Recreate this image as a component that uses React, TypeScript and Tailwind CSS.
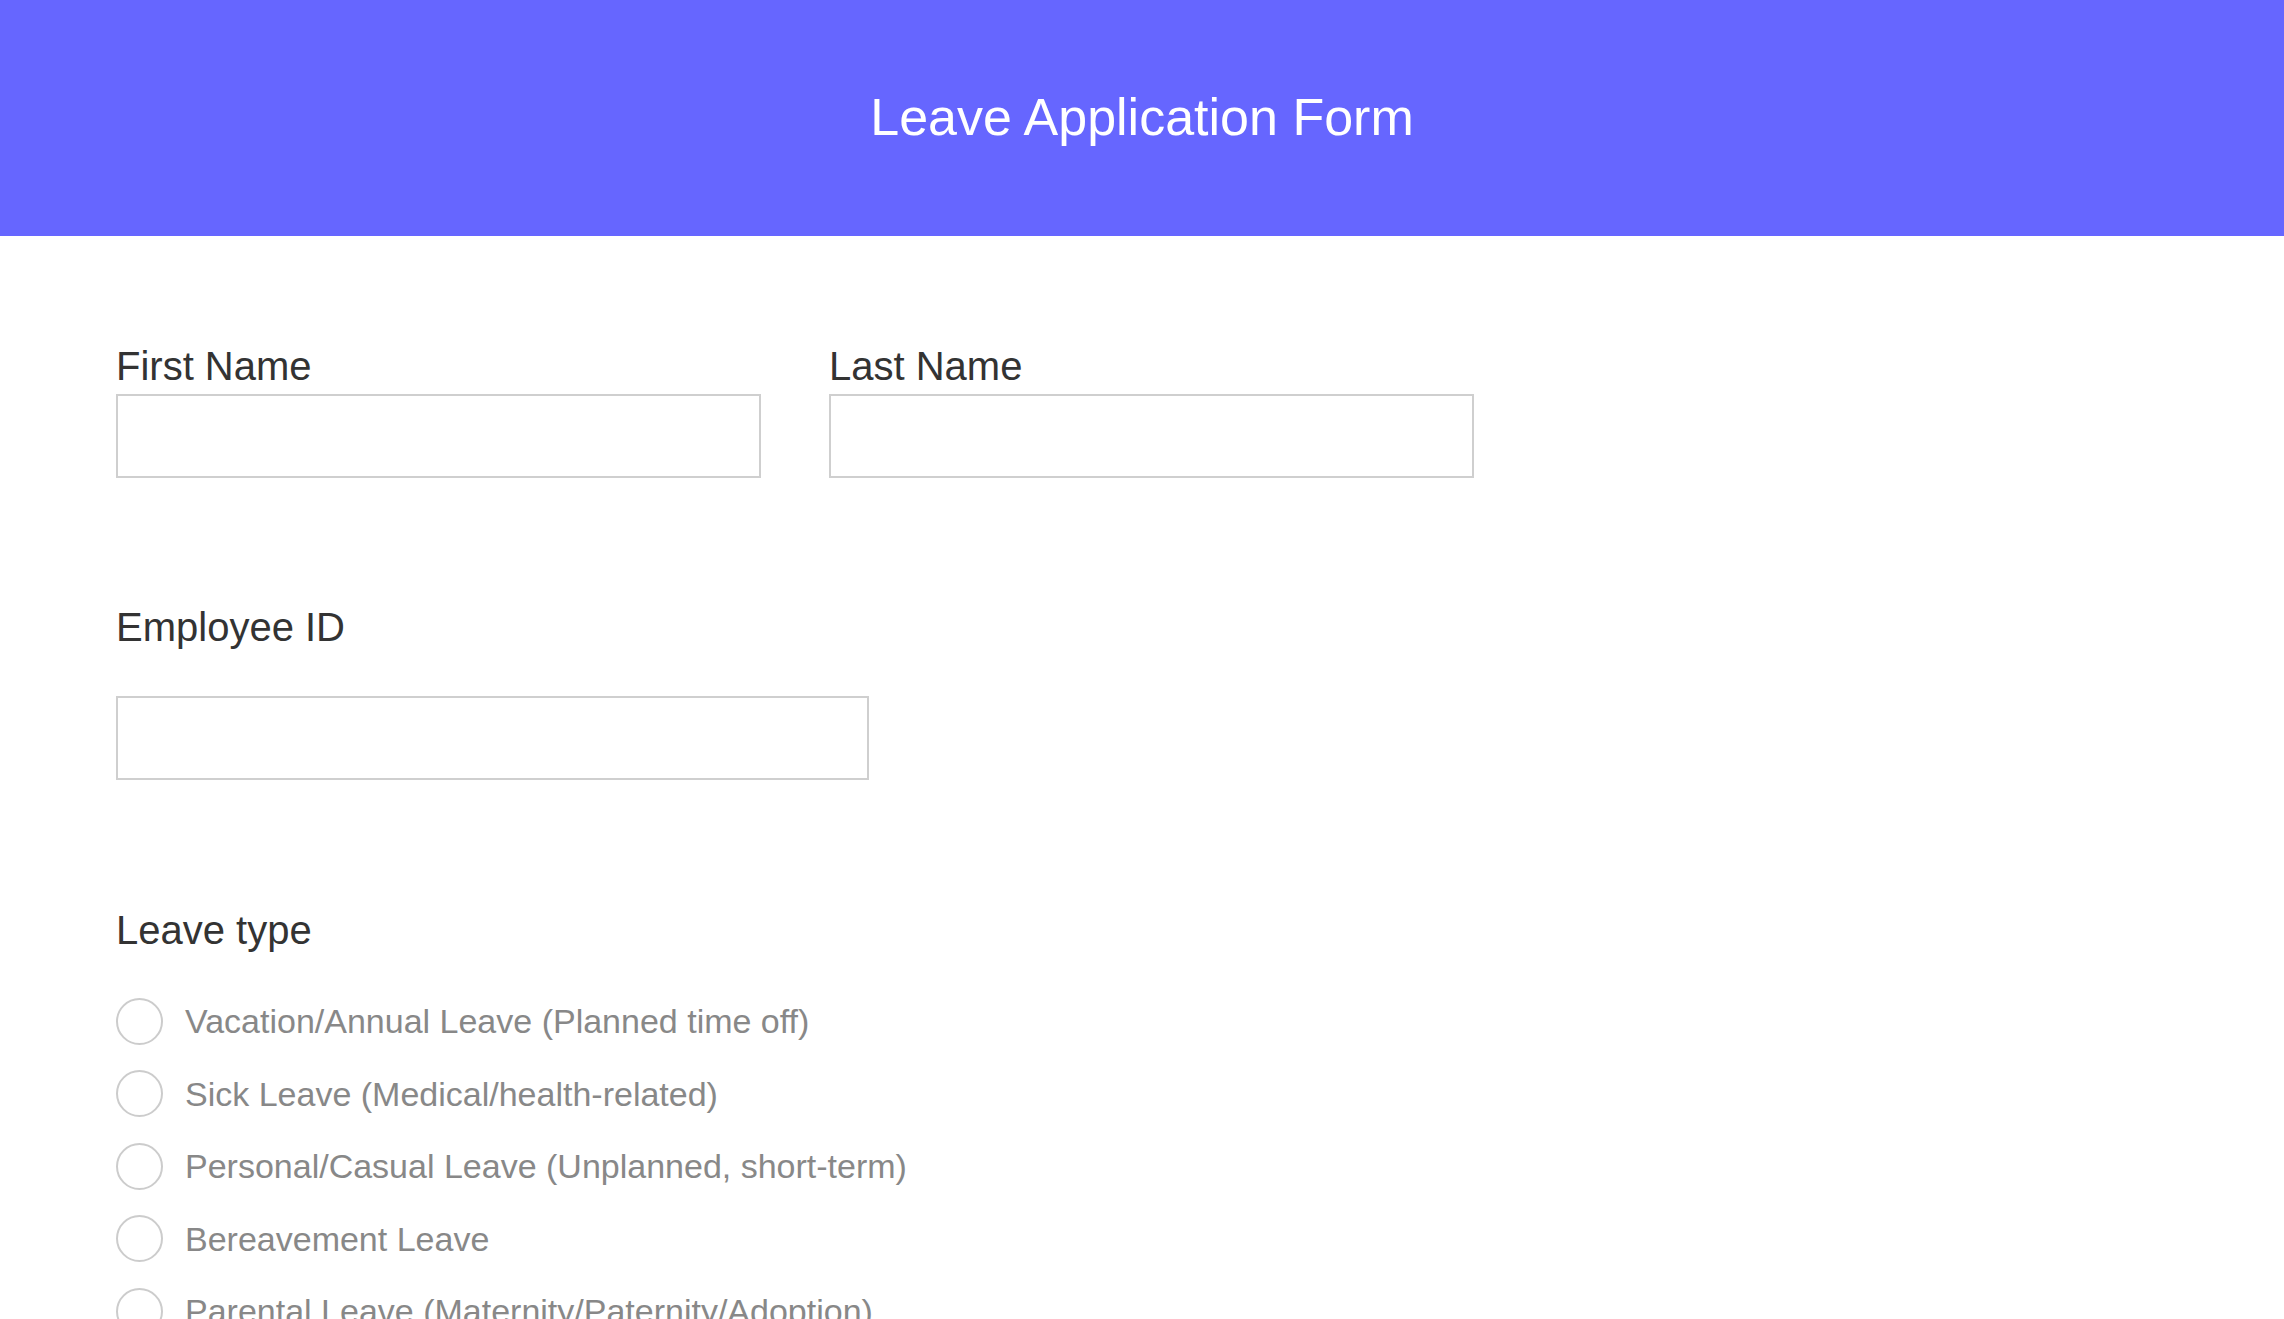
import { useState } from "react";

const leaveTypes = [
  "Vacation/Annual Leave (Planned time off)",
  "Sick Leave (Medical/health-related)",
  "Personal/Casual Leave (Unplanned, short-term)",
  "Bereavement Leave",
  "Parental Leave (Maternity/Paternity/Adoption)",
];

function Field({ label, className }: { label: string; className: string }) {
  return (
    <div className={className}>
      <label className="block text-[40px] leading-[46px] text-[#333333]">{label}</label>
      <input type="text" className="mt-[5px] block h-[84px] w-full border-2 border-[#cfcfcf] bg-white px-4 text-[34px] outline-none" />
    </div>
  );
}

function RadioRow({ label, checked, onSelect }: { label: string; checked: boolean; onSelect: () => void }) {
  return (
    <label className="flex h-[72.5px] cursor-pointer items-center gap-[22px]" onClick={onSelect}>
      <span className="flex h-[47px] w-[47px] shrink-0 items-center justify-center rounded-full border-2 border-[#cccccc] bg-white">
        {checked && <span className="h-[23px] w-[23px] rounded-full bg-[#6666ff]" />}
      </span>
      <span className="text-[34px] leading-[40px] text-[#888888]">{label}</span>
    </label>
  );
}

export default function App() {
  const [leave, setLeave] = useState<number | null>(null);

  return (
    <div className="min-h-screen bg-white font-['Liberation_Sans',Arial,sans-serif]">
      <header className="flex h-[236px] items-center justify-center bg-[#6666ff] pb-[3px]">
        <h1 className="text-[52px] leading-[60px] text-white">Leave Application Form</h1>
      </header>

      <main className="px-[116px] pt-[107px]">
        <div className="flex gap-[68px]">
          <Field label="First Name" className="w-[645px]" />
          <Field label="Last Name" className="w-[645px]" />
        </div>

        <div className="mt-[126px] w-[753px]">
          <label className="block text-[40px] leading-[46px] text-[#333333]">Employee ID</label>
          <input type="text" className="mt-[46px] block h-[84px] w-full border-2 border-[#cfcfcf] bg-white px-4 text-[34px] outline-none" />
        </div>

        <div className="mt-[127px]">
          <div className="text-[40px] leading-[46px] text-[#333333]">Leave type</div>
          <div className="mt-[32px] flex flex-col">
            {leaveTypes.map((t, i) => (
              <RadioRow key={t} label={t} checked={leave === i} onSelect={() => setLeave(i)} />
            ))}
          </div>
        </div>
      </main>
    </div>
  );
}
